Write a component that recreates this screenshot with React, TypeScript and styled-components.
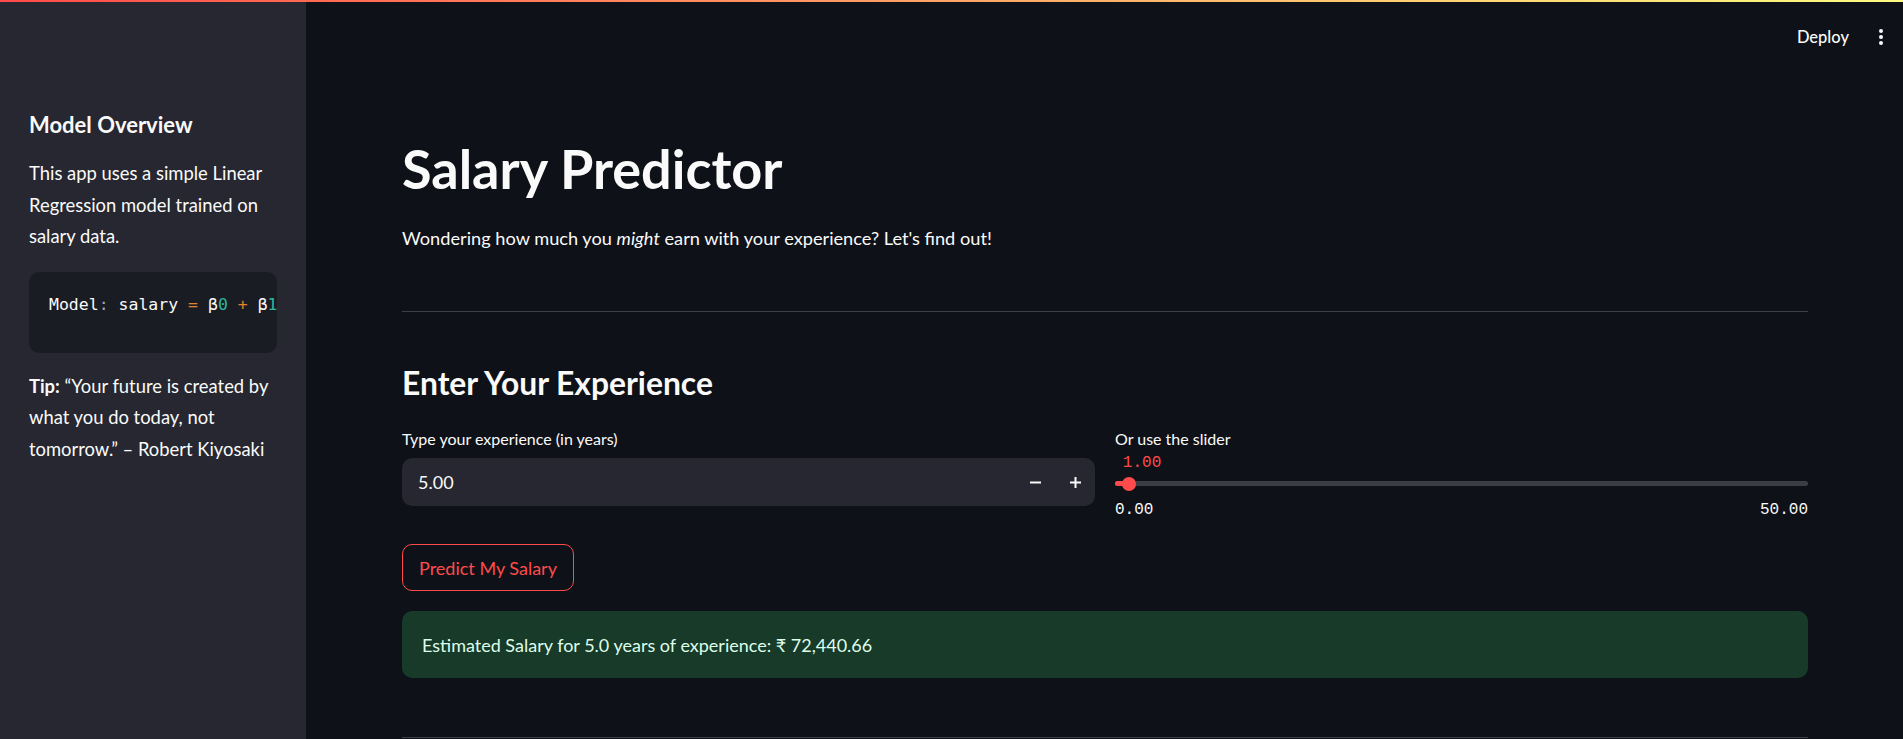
import React from 'react'
import styled, { createGlobalStyle } from 'styled-components'

const GlobalStyle = createGlobalStyle`
  html, body {
    margin: 0;
    padding: 0;
    background: #0e1117;
    color: #fafafa;
    font-family: Lato, "Noto Sans", sans-serif;
    overflow: hidden;
  }
  * {
    box-sizing: border-box;
  }
`

const App = () => {
  return (
    <>
      <GlobalStyle />
      <Decoration />
      <Shell>
        <Sidebar>
          <SideHeading>Model Overview</SideHeading>
          <SideText>This app uses a simple Linear Regression model trained on salary data.</SideText>
          <CodeBlock>
            <code>
              Model<Tok color="#a4a6ad">:</Tok> salary <Tok color="#e5822e">=</Tok> β<Tok color="#2cb69a">0</Tok>{' '}
              <Tok color="#e5822e">+</Tok> β<Tok color="#2cb69a">1</Tok> <Tok color="#e5822e">*</Tok> experience
            </code>
          </CodeBlock>
          <SideText>
            <b>Tip:</b> “Your future is created by what you do today, not tomorrow.” – Robert Kiyosaki
          </SideText>
        </Sidebar>

        <Main>
          <Header>
            <DeployButton>Deploy</DeployButton>
            <MenuButton aria-label="menu">
              <Dot />
              <Dot />
              <Dot />
            </MenuButton>
          </Header>

          <Content>
            <Title>Salary Predictor</Title>
            <Subtitle>
              Wondering how much you <i>might</i> earn with your experience? Let's find out!
            </Subtitle>
            <Divider gap={57} />

            <SectionTitle>Enter Your Experience</SectionTitle>
            <Columns>
              <Field>
                <Label>Type your experience (in years)</Label>
                <NumberInput>
                  <NumberValue>5.00</NumberValue>
                  <StepButton aria-label="decrement">
                    <svg width="11" height="11" viewBox="0 0 11 11">
                      <rect x="0" y="4.5" width="11" height="2" fill="#fafafa" />
                    </svg>
                  </StepButton>
                  <StepButton aria-label="increment">
                    <svg width="11" height="11" viewBox="0 0 11 11">
                      <rect x="0" y="4.5" width="11" height="2" fill="#fafafa" />
                      <rect x="4.5" y="0" width="2" height="11" fill="#fafafa" />
                    </svg>
                  </StepButton>
                </NumberInput>
              </Field>

              <Field>
                <Label>Or use the slider</Label>
                <Slider>
                  <ThumbValue style={{ left: `${(1 / 50) * 100}%` }}>1.00</ThumbValue>
                  <Track>
                    <TrackFill style={{ width: `${(1 / 50) * 100}%` }} />
                    <Thumb style={{ left: `${(1 / 50) * 100}%` }} />
                  </Track>
                  <TickRow>
                    <span>0.00</span>
                    <span>50.00</span>
                  </TickRow>
                </Slider>
              </Field>
            </Columns>

            <PredictButton>Predict My Salary</PredictButton>
            <SuccessBox>Estimated Salary for 5.0 years of experience: ₹ 72,440.66</SuccessBox>
            <Divider gap={59} />
          </Content>
        </Main>
      </Shell>
    </>
  )
}

const Decoration = styled.div`
  height: 2px;
  background: linear-gradient(90deg, #ff4b4b, #fffd80);
`

const Shell = styled.div`
  display: flex;
  height: 737px;
`

const Sidebar = styled.aside`
  width: 306px;
  flex-shrink: 0;
  background: #262730;
  padding: 108px 29px 0 29px;
  display: flex;
  flex-direction: column;
`

const SideHeading = styled.h3`
  margin: 0;
  font-size: 22px;
  line-height: 30px;
  font-weight: 700;
`

const SideText = styled.p`
  margin: 18px 0 0;
  font-size: 18.4px;
  line-height: 31.5px;

  b {
    font-weight: 700;
  }
`

const CodeBlock = styled.pre`
  margin: 19px 0 0;
  background: #1a1c24;
  border-radius: 10px;
  padding: 20px 20px 34px;
  overflow: hidden;
  white-space: pre;
  font-family: "Liberation Mono", "DejaVu Sans Mono", monospace;
  font-size: 16.5px;
  line-height: 26px;
  color: #fafafa;
`

const Tok = styled.span<{ color: string }>`
  color: ${(p) => p.color};
`

const Main = styled.main`
  flex: 1;
  display: flex;
  flex-direction: column;
  min-width: 0;
`

const Header = styled.header`
  height: 70px;
  display: flex;
  align-items: center;
  justify-content: flex-end;
  padding-right: 19px;
  gap: 29px;
`

const DeployButton = styled.span`
  font-size: 16.5px;
  font-weight: 500;
  color: #fafafa;
`

const MenuButton = styled.span`
  display: flex;
  flex-direction: column;
  gap: 2px;
  align-items: center;
  width: 6px;
`

const Dot = styled.span`
  width: 4px;
  height: 4px;
  border-radius: 50%;
  background: #fafafa;
`

const Content = styled.div`
  padding: 0 95px 0 96px;
`

const Title = styled.h1`
  margin: 66px 0 0;
  font-size: 54px;
  line-height: 62px;
  font-weight: 700;
`

const Subtitle = styled.p`
  margin: 22px 0 0;
  font-size: 18.2px;
  line-height: 32px;

  i {
    font-style: italic;
  }
`

const Divider = styled.hr<{ gap: number }>`
  margin: ${(p) => p.gap}px 0 0;
  border: none;
  height: 1px;
  background: #3d3f46;
`

const SectionTitle = styled.h3`
  margin: 51px 0 0;
  font-size: 31.8px;
  line-height: 40px;
  font-weight: 700;
`

const Columns = styled.div`
  margin-top: 25px;
  display: grid;
  grid-template-columns: 1fr 1fr;
  gap: 20px;
`

const Field = styled.div`
  display: flex;
  flex-direction: column;
`

const Label = styled.label`
  font-size: 16px;
  line-height: 22px;
  color: #fafafa;
`

const NumberInput = styled.div`
  margin-top: 8px;
  height: 48px;
  background: #262730;
  border-radius: 10px;
  display: flex;
  align-items: center;
  padding-left: 16px;
`

const NumberValue = styled.span`
  flex: 1;
  font-size: 18px;
`

const StepButton = styled.span`
  width: 40px;
  height: 48px;
  display: flex;
  align-items: center;
  justify-content: center;
`

const Slider = styled.div`
  position: relative;
  padding-top: 23px;
`

const ThumbValue = styled.span`
  position: absolute;
  top: 3px;
  margin-left: -6px;
  font-family: "Liberation Mono", "DejaVu Sans Mono", monospace;
  font-size: 16px;
  line-height: 20px;
  color: #ff4b4b;
`

const Track = styled.div`
  position: relative;
  margin: 8px 0;
  height: 5px;
  border-radius: 3px;
  background: #3b3d45;
`

const TrackFill = styled.div`
  height: 100%;
  border-radius: 3px;
  background: #ff4b4b;
`

const Thumb = styled.div`
  position: absolute;
  top: 50%;
  width: 14px;
  height: 14px;
  border-radius: 50%;
  background: #ff4b4b;
  transform: translate(-50%, -50%);
`

const TickRow = styled.div`
  margin-top: 14px;
  display: flex;
  justify-content: space-between;
  font-family: "Liberation Mono", "DejaVu Sans Mono", monospace;
  font-size: 16px;
  line-height: 20px;
  color: #fafafa;
`

const PredictButton = styled.button`
  margin-top: 24px;
  height: 47px;
  padding: 0 16px;
  background: transparent;
  border: 1px solid #ff4b4b;
  border-radius: 10px;
  color: #ff4b4b;
  font-family: Lato, "Noto Sans", sans-serif;
  font-size: 18px;
  cursor: pointer;
`

const SuccessBox = styled.div`
  margin-top: 20px;
  height: 67px;
  display: flex;
  align-items: center;
  padding: 0 20px;
  background: #173a29;
  border-radius: 10px;
  color: #dffde9;
  font-size: 18px;
`

export default App
